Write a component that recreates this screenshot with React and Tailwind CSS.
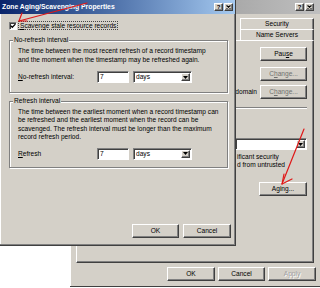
import React from "react";

const raised =
  "bg-[#d4d0c8] border border-t-white border-l-white border-r-[#404040] border-b-[#404040] shadow-[inset_-1px_-1px_0_#808080]";
const sunken =
  "bg-white border border-t-[#808080] border-l-[#808080] border-r-white border-b-white shadow-[inset_1px_1px_0_#404040]";

function Btn({ w, children, className = "" }) {
  return (
    <div
      className={`${raised} h-[14px] flex items-center justify-center shrink-0 ${className}`}
      style={{ width: w }}
    >
      {children}
    </div>
  );
}

function TitleBtns() {
  return (
    <div className="flex items-center gap-[1px]">
      <div className={`${raised} w-[9px] h-[8px] flex items-center justify-center`}>
        <span className="text-[6px] leading-[6px] font-bold text-black">?</span>
      </div>
      <div className={`${raised} w-[9px] h-[8px] flex items-center justify-center`}>
        <svg width="5" height="4" viewBox="0 0 5 4">
          <path d="M0.5 0.5 L4.5 3.5 M4.5 0.5 L0.5 3.5" stroke="#000" strokeWidth="1.1" />
        </svg>
      </div>
    </div>
  );
}

function Select({ w, value }) {
  return (
    <div className={`${sunken} h-[12px] flex items-stretch shrink-0`} style={{ width: w }}>
      <div className="flex-1 pl-[2px] flex items-center overflow-hidden">{value}</div>
      <div className={`${raised} w-[9px] m-[1px] flex items-center justify-center`}>
        <svg width="5" height="3" viewBox="0 0 5 3">
          <path d="M0 0 H5 L2.5 3 Z" fill="#000" />
        </svg>
      </div>
    </div>
  );
}

function Field({ w, value }) {
  return (
    <div className={`${sunken} h-[12px] pl-[2px] flex items-center shrink-0`} style={{ width: w }}>
      {value}
    </div>
  );
}

const etched =
  "relative border border-[#808080] shadow-[1px_1px_0_#fff,inset_1px_1px_0_#fff]";

export default function App() {
  return (
    <div className="relative w-[320px] h-[288px] overflow-hidden bg-white text-black font-['Liberation_Sans',Arial,sans-serif] text-[6.6px] leading-[8px]">
      {/* Background window (zone properties) */}
      <div className="absolute left-[70px] top-0 w-[252px] h-[287px] bg-[#d4d0c8] border-b border-[#404040] shadow-[inset_1px_0_0_#fff] flex flex-col">
        <div className="h-[14px] shrink-0 bg-gradient-to-r from-[#808080] to-[#c0c0c0] flex items-center justify-end pr-[8px]">
          <TitleBtns />
        </div>
        <div className="flex flex-col items-end pr-[8px] mt-[4px]">
          <div className="w-[74px] h-[11px] border-t border-l border-t-white border-l-white border-r border-r-[#404040] shadow-[inset_-1px_0_0_#808080] flex items-center justify-center">
            Security
          </div>
          <div className="w-[74px] h-[11px] border-t border-l border-t-white border-l-white border-r border-r-[#404040] shadow-[inset_-1px_0_0_#808080] flex items-center justify-center">
            Name Servers
          </div>
        </div>
        <div className="ml-[6px] mr-[8px] h-[223px] shrink-0 border border-t-white border-l-white border-r-[#404040] border-b-[#404040] shadow-[inset_-1px_-1px_0_#808080] flex flex-col items-end pr-[6px]">
          <Btn w="47px" className="mt-[6px]">
            Pau<u>s</u>e
          </Btn>
          <Btn w="47px" className="mt-[6px] text-[#707070]">
            C<u>h</u>ange...
          </Btn>
          <div className="mt-[4px] flex items-center gap-[3px]">
            <span>domain</span>
            <Btn w="47px" className="text-[#707070]">
              C<u>h</u>ange...
            </Btn>
          </div>
          <div className="mt-[8px] w-[72px] h-[2px] border-t border-[#808080] border-b border-b-white" />
          <div className="mt-[29px]">
            <Select w="72px" value="" />
          </div>
          <div className="mt-[3px] w-[70px] leading-[8.3px] whitespace-nowrap">
            ificant security
            <br />
            d from untrusted
          </div>
          <Btn w="48px" className="mt-[12px]">
            A<u>g</u>ing...
          </Btn>
        </div>
        <div className="flex justify-end gap-[3px] pr-[6px] mt-[4px]">
          <Btn w="48px">OK</Btn>
          <Btn w="47px">Cancel</Btn>
          <Btn w="48px" className="text-[#a0a0a0] [text-shadow:1px_1px_0_#fff]">
            Apply
          </Btn>
        </div>
      </div>

      {/* Foreground dialog */}
      <div className="absolute left-0 top-0 w-[236px] h-[246px] bg-[#d4d0c8] border-r border-b border-[#404040] shadow-[inset_-1px_-1px_0_#808080,inset_1px_1px_0_#fff] flex flex-col">
        <div className="h-[14px] shrink-0 bg-gradient-to-r from-[#0a246a] to-[#a6caf0] flex items-center justify-between pl-[2px] pr-[2px]">
          <span className="text-white font-bold text-[6.8px] whitespace-nowrap">
            Zone Aging/Scavenging Properties
          </span>
          <TitleBtns />
        </div>

        <div className="mt-[7px] h-[9px] flex items-center pl-[9px]">
          <div className={`${sunken} w-[8px] h-[8px] flex items-center justify-center`}>
            <svg width="6" height="6" viewBox="0 0 6 6">
              <path d="M0.6 2.6 L2.3 4.3 L5.4 1.1" stroke="#000" strokeWidth="1.3" fill="none" />
            </svg>
          </div>
          <div className="ml-[1px] h-[9px] px-[1px] border border-dotted border-[#444] flex items-center whitespace-nowrap">
            <u>S</u>cavenge stale resource records
          </div>
        </div>

        <div className={`${etched} mt-[10px] ml-[9px] mr-[7px] h-[53px] pl-[8px] pt-[6px]`}>
          <span className="absolute left-[3px] -top-[5px] px-[1px] bg-[#d4d0c8] leading-[8px]">
            No-refresh interval
          </span>
          <div className="leading-[8.5px] whitespace-nowrap">
            The time between the most recent refresh of a record timestamp
            <br />
            and the moment when the timestamp may be refreshed again.
          </div>
          <div className="mt-[7px] flex items-center">
            <span className="w-[79px] whitespace-nowrap">
              <u>N</u>o-refresh interval:
            </span>
            <Field w="32px" value="7" />
            <div className="ml-[4px]">
              <Select w="59px" value="days" />
            </div>
          </div>
        </div>

        <div className={`${etched} mt-[8px] ml-[9px] mr-[7px] h-[67px] pl-[8px] pt-[6px]`}>
          <span className="absolute left-[3px] -top-[5px] px-[1px] bg-[#d4d0c8] leading-[8px]">
            Refresh interval
          </span>
          <div className="leading-[8.4px] whitespace-nowrap">
            The time between the earliest moment when a record timestamp can
            <br />
            be refreshed and the earliest moment when the record can be
            <br />
            scavenged. The refresh interval must be longer than the maximum
            <br />
            record refresh period.
          </div>
          <div className="mt-[6px] flex items-center">
            <span className="w-[79px] whitespace-nowrap">
              <u>R</u>efresh
            </span>
            <Field w="32px" value="7" />
            <div className="ml-[4px]">
              <Select w="59px" value="days" />
            </div>
          </div>
        </div>

        <div className="mt-[56px] flex justify-end gap-[4px] pr-[4px]">
          <Btn w="47px">OK</Btn>
          <Btn w="48px">Cancel</Btn>
        </div>
      </div>

      {/* Red annotation arrows */}
      <svg
        className="absolute left-0 top-0 pointer-events-none"
        width="320"
        height="288"
        viewBox="0 0 320 288"
      >
        <g stroke="#e01818" strokeWidth="1.2" fill="none" strokeLinecap="round">
          <path d="M87 3 L19 21" />
          <path d="M19 21 L22 13 M19 21 L27 21" />
          <path d="M304 129 L282 184" />
          <path d="M282 184 L284 174 M282 184 L292 179" />
        </g>
      </svg>
    </div>
  );
}
